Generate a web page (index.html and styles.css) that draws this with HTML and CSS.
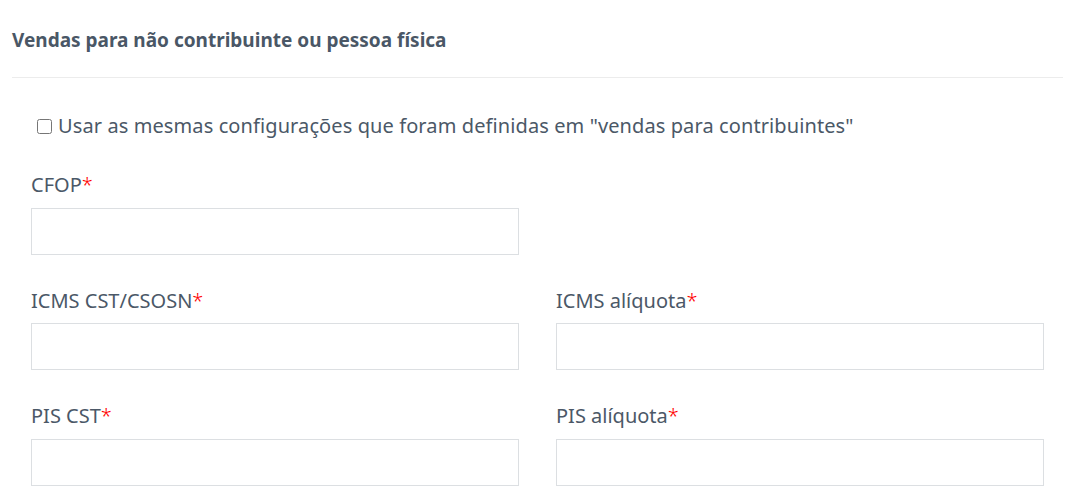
FILE: index.html
```html
<!DOCTYPE html>
<html lang="pt">
<head>
<meta charset="utf-8">
<link rel="stylesheet" href="styles.css">
</head>
<body>
<section class="card">
  <header class="card-header">
    <h2 class="title">Vendas para não contribuinte ou pessoa física</h2>
  </header>
  <div class="card-body">
    <label class="check">
      <input type="checkbox" class="check-input">
      <span>Usar as mesmas configurações que foram definidas em "vendas para contribuintes"</span>
    </label>
    <div class="grid">
      <div class="field">
        <label class="label">CFOP<span class="req">*</span></label>
        <input class="input" type="text">
      </div>
      <div class="field"></div>
      <div class="field">
        <label class="label">ICMS CST/CSOSN<span class="req">*</span></label>
        <input class="input" type="text">
      </div>
      <div class="field">
        <label class="label">ICMS alíquota<span class="req">*</span></label>
        <input class="input" type="text">
      </div>
      <div class="field">
        <label class="label">PIS CST<span class="req">*</span></label>
        <input class="input" type="text">
      </div>
      <div class="field">
        <label class="label">PIS alíquota<span class="req">*</span></label>
        <input class="input" type="text">
      </div>
    </div>
  </div>
</section>
</body>
</html>
```
FILE: styles.css
```css
html, body {
  margin: 0;
  padding: 0;
  background: #ffffff;
}
body {
  font-family: "Noto Sans", "Open Sans", sans-serif;
  color: #4b5867;
  overflow: hidden;
}
.card {
  padding: 0 19px 0 12px;
}
.card-header {
  height: 77px;
  border-bottom: 1px solid #ececec;
  display: flex;
  align-items: center;
}
.title {
  margin: 0;
  font-size: 19px;
  font-weight: 700;
  line-height: 24px;
  color: #4a5766;
  position: relative;
  top: 1px;
}
.card-body {
  padding: 36px 19px 0 19px;
}
.check {
  display: flex;
  align-items: center;
  font-size: 20px;
  line-height: 24px;
  padding-left: 6px;
  letter-spacing: 0.1px;
}
.check-input {
  margin: 0 6px 0 0;
  width: 15px;
  height: 15px;
}
.grid {
  display: grid;
  grid-template-columns: 488px 488px;
  column-gap: 37px;
  row-gap: 34px;
  margin-top: 35px;
}
.field {
  display: flex;
  flex-direction: column;
}
.label {
  font-size: 20px;
  line-height: 24px;
  margin-bottom: 10.5px;
}
.req {
  color: #ff0000;
  font-weight: 300;
}
.input {
  box-sizing: border-box;
  height: 47px;
  width: 488px;
  margin: 0;
  border: 1px solid #dcdfe2;
  border-radius: 0;
  background: #fff;
  outline: none;
}
```
